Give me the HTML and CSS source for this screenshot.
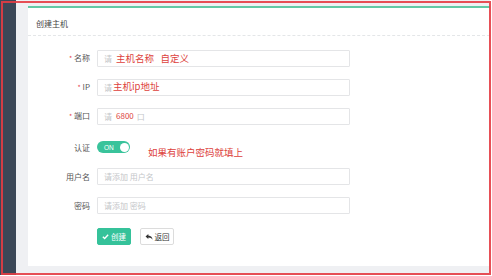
FILE: index.html
```html
<!DOCTYPE html>
<html lang="zh">
<head>
<meta charset="utf-8">
<title>创建主机</title>
<link rel="stylesheet" href="styles.css">
</head>
<body>
<div class="app">
  <aside class="sidebar"></aside>
  <main class="main">
    <section class="card">
      <header class="card-head">创建主机</header>
      <form class="form">
        <div class="row">
          <label class="label"><span class="req">*</span> 名称</label>
          <div class="field">
            <div class="input"><span class="ph">请</span><span class="note note-name">主机名称&nbsp;&nbsp;&nbsp;自定义</span></div>
          </div>
        </div>
        <div class="row">
          <label class="label"><span class="req">*</span> IP</label>
          <div class="field">
            <div class="input"><span class="ph">请</span><span class="note note-ip">主机ip地址</span></div>
          </div>
        </div>
        <div class="row">
          <label class="label"><span class="req">*</span> 端口</label>
          <div class="field">
            <div class="input"><span class="ph">请</span><span class="note note-port">6800</span><span class="ph">口</span></div>
          </div>
        </div>
        <div class="row row-toggle">
          <label class="label">认证</label>
          <div class="field">
            <div class="toggle"><span class="toggle-text">ON</span><span class="knob"></span></div>
            <span class="note note-auth">如果有账户密码就填上</span>
          </div>
        </div>
        <div class="row">
          <label class="label">用户名</label>
          <div class="field">
            <div class="input"><span class="ph">请添加 用户名</span></div>
          </div>
        </div>
        <div class="row">
          <label class="label">密码</label>
          <div class="field">
            <div class="input"><span class="ph">请添加 密码</span></div>
          </div>
        </div>
        <div class="row row-btns">
          <span></span>
          <div class="btns">
            <button type="button" class="btn btn-primary">
              <svg class="ico" viewBox="0 0 10 10" width="7" height="7"><polyline points="1.2,5.2 3.8,7.8 8.8,2.4" fill="none" stroke="#fff" stroke-width="2"/></svg>创建
            </button>
            <button type="button" class="btn btn-default">
              <svg class="ico" viewBox="0 0 12 12" width="8" height="8"><path d="M5 1.5 L0.8 5.2 L5 8.9 V6.6 C8 6.6 10 7.6 11.3 10 C11 6.8 9 4.2 5 3.9 Z" fill="#333"/></svg>返回
            </button>
          </div>
        </div>
      </form>
    </section>
  </main>
  <div class="frame"></div>
</div>
</body>
</html>
```

FILE: styles.css
```css
* { box-sizing: border-box; }
html, body { margin: 0; padding: 0; background: #fff; }
body {
  font-family: "Noto Sans CJK SC", "Noto Sans", "Liberation Sans", sans-serif;
  font-size: 8px;
  color: #555;
}
.app {
  position: relative;
  display: flex;
  width: 490px;
  height: 275px;
  background: #eff0f3;
}
.sidebar {
  width: 16px;
  flex: none;
  background: #3b4757;
}
.main {
  flex: 1;
  padding: 6px 0 0 12px;
}
.card {
  height: 260px;
  background: #fff;
  border-top: 2px solid #62c9a5;
}
.card-head {
  height: 28px;
  padding: 3px 8px 0;
  display: flex;
  align-items: center;
  font-size: 8px;
  color: #444;
  border-bottom: 1px dashed #e4e6e8;
}
.form {
  display: flex;
  flex-direction: column;
  gap: 12px;
  padding-top: 13px;
}
.row {
  display: grid;
  grid-template-columns: 62px 253px;
  column-gap: 7px;
  height: 17px;
  align-items: center;
}
.row-toggle { margin-top: 2.5px; }
.row-btns { margin-top: 2.5px; }
.label {
  text-align: right;
  color: #555;
  font-size: 8px;
  line-height: 17px;
  white-space: nowrap;
}
.req { color: #e5484d; font-size: 7px; }
.field {
  position: relative;
  height: 17px;
  display: flex;
  align-items: center;
}
.input {
  width: 253px;
  height: 17px;
  border: 1px solid #e4e5e7;
  border-radius: 1px;
  background: #fff;
  padding-left: 6px;
  display: flex;
  align-items: center;
  white-space: nowrap;
  overflow: hidden;
}
.ph { color: #c4c6c9; font-size: 8px; }
.note {
  color: #dd3f3c;
  font-size: 9.5px;
  white-space: nowrap;
  line-height: 1;
}
.note-name { margin-left: 4px; margin-top: 2px; }
.note-ip { margin-left: 1px; }
.note-port { margin-left: 4px; margin-right: 3px; font-size: 8px; }
.note-auth { position: absolute; left: 51px; top: 9px; }
.toggle {
  width: 33px;
  height: 12px;
  border-radius: 6px;
  background: #39c39b;
  display: flex;
  align-items: center;
  justify-content: space-between;
  padding: 0 1.5px 0 7px;
}
.toggle-text { color: #fff; font-size: 6.5px; font-family: "Liberation Sans", sans-serif; }
.knob {
  width: 9px;
  height: 9px;
  border-radius: 50%;
  background: #fff;
}
.btns { display: flex; gap: 9px; }
.btn {
  height: 17px;
  width: 34px;
  padding: 0;
  border-radius: 2px;
  font-family: inherit;
  font-size: 7.5px;
  display: inline-flex;
  align-items: center;
  justify-content: center;
  gap: 2px;
  cursor: pointer;
}
.btn-primary { background: #35c29a; border: 1px solid #35c29a; color: #fff; }
.btn-default { background: #fff; border: 1px solid #dcdcdc; color: #333; }
.ico { display: block; }
.frame {
  position: absolute;
  left: 1px;
  top: 1px;
  width: 490px;
  height: 274px;
  border: 2px solid rgba(228, 60, 68, 0.9);
  pointer-events: none;
}
```
